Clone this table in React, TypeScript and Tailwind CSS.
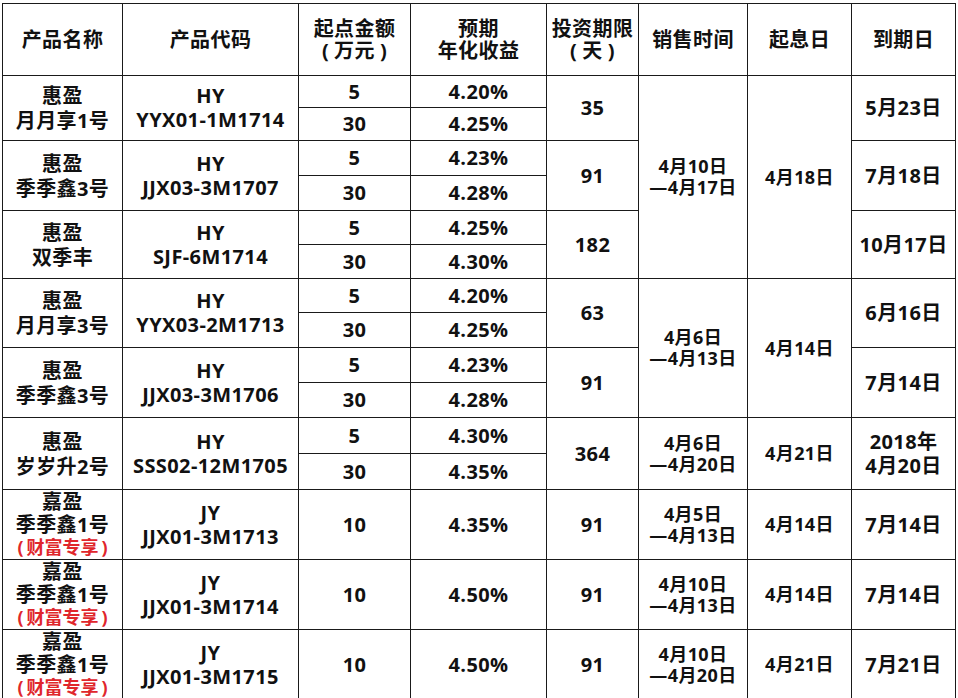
import React from 'react';

type Product = {
  name: string[];
  tag?: string;
  code: string[];
  tiers: [string, string][];
  days: string;
  sale?: { text: string[]; span: number };
  start?: { text: string; span: number };
  end: string[];
  heights: number[];
};

const products: Product[] = [
  {
    name: ['惠盈', '月月享1号'],
    code: ['HY', 'YYX01-1M1714'],
    tiers: [['5', '4.20%'], ['30', '4.25%']],
    days: '35',
    sale: { text: ['4月10日', '—4月17日'], span: 6 },
    start: { text: '4月18日', span: 6 },
    end: ['5月23日'],
    heights: [32, 33],
  },
  {
    name: ['惠盈', '季季鑫3号'],
    code: ['HY', 'JJX03-3M1707'],
    tiers: [['5', '4.23%'], ['30', '4.28%']],
    days: '91',
    end: ['7月18日'],
    heights: [35, 35],
  },
  {
    name: ['惠盈', '双季丰'],
    code: ['HY', 'SJF-6M1714'],
    tiers: [['5', '4.25%'], ['30', '4.30%']],
    days: '182',
    end: ['10月17日'],
    heights: [34, 34],
  },
  {
    name: ['惠盈', '月月享3号'],
    code: ['HY', 'YYX03-2M1713'],
    tiers: [['5', '4.20%'], ['30', '4.25%']],
    days: '63',
    sale: { text: ['4月6日', '—4月13日'], span: 4 },
    start: { text: '4月14日', span: 4 },
    end: ['6月16日'],
    heights: [34, 35],
  },
  {
    name: ['惠盈', '季季鑫3号'],
    code: ['HY', 'JJX03-3M1706'],
    tiers: [['5', '4.23%'], ['30', '4.28%']],
    days: '91',
    end: ['7月14日'],
    heights: [35, 35],
  },
  {
    name: ['惠盈', '岁岁升2号'],
    code: ['HY', 'SSS02-12M1705'],
    tiers: [['5', '4.30%'], ['30', '4.35%']],
    days: '364',
    sale: { text: ['4月6日', '—4月20日'], span: 2 },
    start: { text: '4月21日', span: 2 },
    end: ['2018年', '4月20日'],
    heights: [36, 36],
  },
  {
    name: ['嘉盈', '季季鑫1号'],
    tag: '财富专享',
    code: ['JY', 'JJX01-3M1713'],
    tiers: [['10', '4.35%']],
    days: '91',
    sale: { text: ['4月5日', '—4月13日'], span: 1 },
    start: { text: '4月14日', span: 1 },
    end: ['7月14日'],
    heights: [69],
  },
  {
    name: ['嘉盈', '季季鑫1号'],
    tag: '财富专享',
    code: ['JY', 'JJX01-3M1714'],
    tiers: [['10', '4.50%']],
    days: '91',
    sale: { text: ['4月10日', '—4月13日'], span: 1 },
    start: { text: '4月14日', span: 1 },
    end: ['7月14日'],
    heights: [69],
  },
  {
    name: ['嘉盈', '季季鑫1号'],
    tag: '财富专享',
    code: ['JY', 'JJX01-3M1715'],
    tiers: [['10', '4.50%']],
    days: '91',
    sale: { text: ['4月10日', '—4月20日'], span: 1 },
    start: { text: '4月21日', span: 1 },
    end: ['7月21日'],
    heights: [68],
  },
];

const cell = 'border border-[#1a1a1a] text-center align-middle p-0';

const Lines = ({ lines, lh }: { lines: string[]; lh: string }) => (
  <div className={lh}>
    {lines.map((l, i) => (
      <div key={i}>{l}</div>
    ))}
  </div>
);

// full-width brackets with the loose spacing of the original
const Paren = ({ children }: { children: React.ReactNode }) => (
  <div>
    <span className="pr-[5px]">(</span>
    {children}
    <span className="pl-[5px]">)</span>
  </div>
);

export default function App() {
  return (
    <div className="bg-white w-[958px] h-[698px] pt-[3px] pl-[2px] overflow-hidden">
      <table
        className="border-collapse table-fixed w-[953px] text-[#111] font-bold text-[20px] tracking-[0.4px]"
        style={{ fontFamily: '"Open Sans", "Noto Sans CJK SC", sans-serif' }}
      >
        <colgroup>
          <col className="w-[120px]" />
          <col className="w-[176px]" />
          <col className="w-[112px]" />
          <col className="w-[136px]" />
          <col className="w-[92px]" />
          <col className="w-[109px]" />
          <col className="w-[104px]" />
          <col className="w-[104px]" />
        </colgroup>
        <thead>
          <tr className="h-[72px]">
            <th className={cell}>产品名称</th>
            <th className={cell}>产品代码</th>
            <th className={cell}>
              <div className="leading-[22px]">
                <div>起点金额</div>
                <Paren>万元</Paren>
              </div>
            </th>
            <th className={cell}>
              <Lines lines={['预期', '年化收益']} lh="leading-[22px]" />
            </th>
            <th className={cell}>
              <div className="leading-[22px]">
                <div>投资期限</div>
                <Paren>天</Paren>
              </div>
            </th>
            <th className={cell}>销售时间</th>
            <th className={cell}>起息日</th>
            <th className={cell}>到期日</th>
          </tr>
        </thead>
        <tbody>
          {products.map((p, pi) =>
            p.tiers.map((t, ti) => (
              <tr key={`${pi}-${ti}`} style={{ height: p.heights[ti] }}>
                {ti === 0 && (
                  <td className={cell} rowSpan={p.tiers.length}>
                    <div className={p.tag ? 'leading-[23px]' : 'leading-[25px]'}>
                      {p.name.map((n, i) => (
                        <div key={i}>{n}</div>
                      ))}
                      {p.tag && (
                        <div className="text-[#e0262c] text-[18px] tracking-normal">
                          <span className="pr-[3px]">(</span>
                          {p.tag}
                          <span className="pl-[3px]">)</span>
                        </div>
                      )}
                    </div>
                  </td>
                )}
                {ti === 0 && (
                  <td className={cell} rowSpan={p.tiers.length}>
                    <Lines lines={p.code} lh="leading-[24px]" />
                  </td>
                )}
                <td className={cell}>{t[0]}</td>
                <td className={cell}>{t[1]}</td>
                {ti === 0 && (
                  <td className={cell} rowSpan={p.tiers.length}>
                    {p.days}
                  </td>
                )}
                {ti === 0 && p.sale && (
                  <td className={`${cell} text-[18px]`} rowSpan={p.sale.span}>
                    <Lines lines={p.sale.text} lh="leading-[21px]" />
                  </td>
                )}
                {ti === 0 && p.start && (
                  <td className={`${cell} text-[18px]`} rowSpan={p.start.span}>
                    {p.start.text}
                  </td>
                )}
                {ti === 0 && (
                  <td className={cell} rowSpan={p.tiers.length}>
                    <Lines lines={p.end} lh="leading-[24px]" />
                  </td>
                )}
              </tr>
            ))
          )}
        </tbody>
      </table>
    </div>
  );
}
